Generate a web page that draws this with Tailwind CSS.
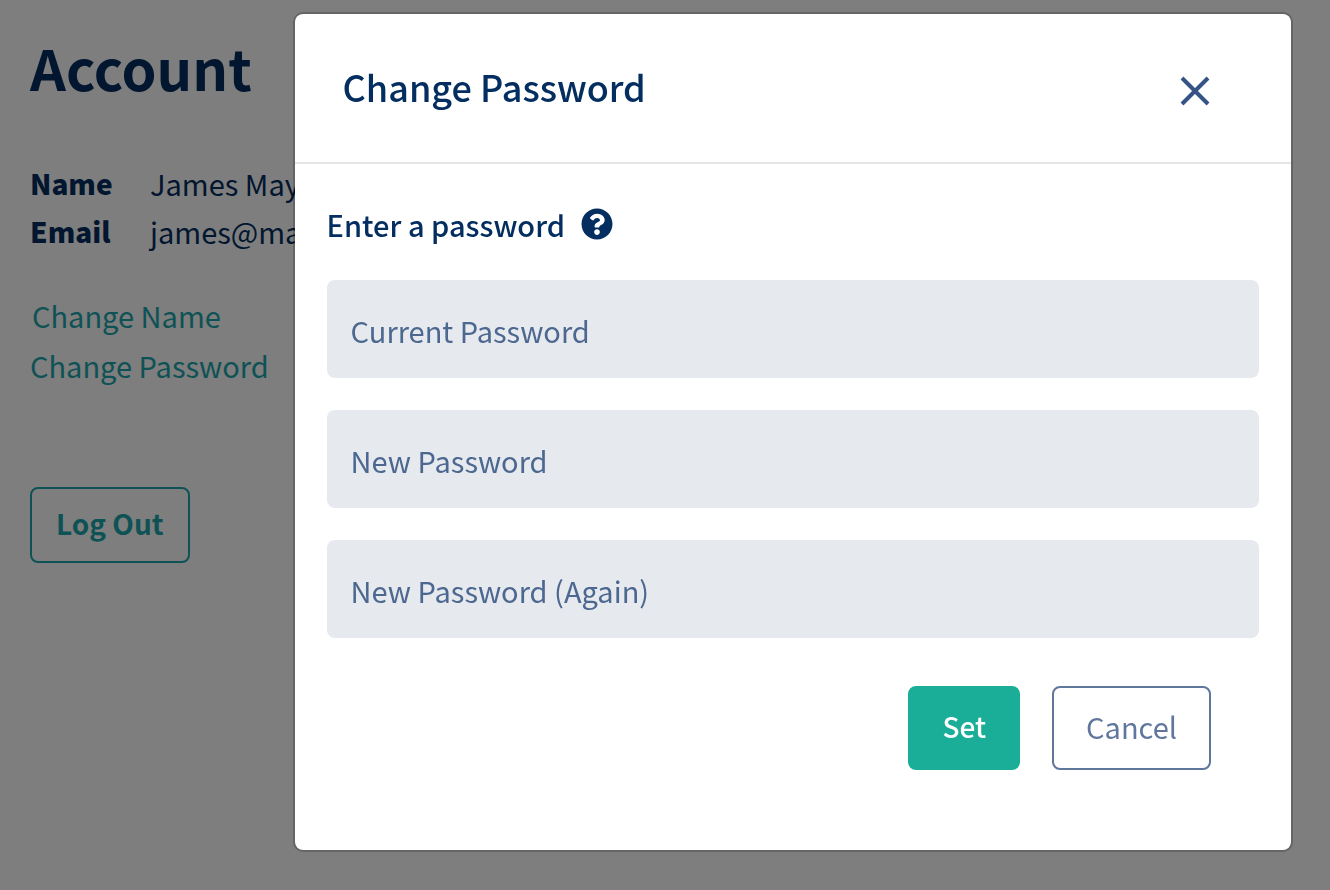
<!DOCTYPE html>
<html lang="en">
<head>
    <meta charset="UTF-8">
    <meta name="viewport" content="width=device-width, initial-scale=1.0">
    <title>Account</title>
    <script src="https://cdn.jsdelivr.net/npm/@tailwindcss/browser@4"></script>
</head>
<body class="min-h-screen overflow-hidden bg-[#fafdfb] font-['Noto_Sans_CJK_SC',sans-serif] text-[29px] leading-[48px] text-[#042d60]">
    <main class="px-[30px] pt-7">
        <h1 class="text-[56px] leading-[78px] font-bold">Account</h1>

        <dl class="mt-[53px] grid grid-cols-[120px_1fr] whitespace-nowrap">
            <dt class="text-[28px] leading-[48px] font-black">Name</dt>
            <dd>James May</dd>
            <dt class="text-[28px] leading-[48px] font-black">Email</dt>
            <dd>james@ma</dd>
        </dl>

        <div class="mt-[35px] flex flex-col items-start text-[#1ca5ac]">
            <button type="button" class="px-[2px] leading-[50px]">Change Name</button>
            <button type="button" class="leading-[50px]">Change Password</button>
            <button type="button" class="mt-[97px] rounded-lg border-2 border-[#1ca5ac] px-6 pt-[10px] pb-[14px] text-[28px] leading-[48px] font-bold">Log Out</button>
        </div>
    </main>

    <!-- Modal -->
    <div class="fixed inset-0 flex items-start bg-black/50 pt-3 pr-[37px] pl-[22%]">
        <div role="dialog" aria-modal="true" aria-labelledby="dialogTitle" class="w-full rounded-[10px] border-2 border-black/20 bg-white bg-clip-padding">
            <div class="flex items-start justify-between border-b-2 border-[#e5e5e5] pt-[43px] pr-20 pb-[47px] pl-12">
                <h2 id="dialogTitle" class="text-[36px] leading-[58px] font-medium">Change Password</h2>
                <button type="button" aria-label="Close" class="mt-[18px] text-[#355386]">
                    <svg class="size-8" viewBox="0 0 32 32" fill="none" stroke="currentColor" stroke-width="4">
                        <path d="M3 3 29 29M29 3 3 29" />
                    </svg>
                </button>
            </div>

            <form class="px-8 pt-9 pb-20">
                <div class="flex items-center gap-4">
                    <h3 class="font-medium">Enter a password</h3>
                    <button type="button" aria-label="Password help">
                        <svg class="size-8" viewBox="0 0 512 512" fill="currentColor">
                            <path d="M504 256c0 136.997-111.043 248-248 248S8 392.997 8 256C8 119.083 119.043 8 256 8s248 111.083 248 248zM262.655 90c-54.497 0-89.255 22.957-116.549 63.758-3.536 5.286-2.353 12.415 2.715 16.258l34.699 26.31c5.205 3.947 12.621 3.008 16.665-2.122 17.864-22.658 30.113-35.797 57.303-35.797 20.429 0 45.698 13.148 45.698 32.958 0 14.976-12.363 22.667-32.534 33.976C247.128 238.528 216 254.941 216 296v4c0 6.627 5.373 12 12 12h56c6.627 0 12-5.373 12-12v-1.333c0-28.462 83.186-29.647 83.186-106.667 0-58.002-60.165-102-116.531-102zM256 338c-25.365 0-46 20.635-46 46 0 25.364 20.635 46 46 46s46-20.636 46-46c0-25.365-20.635-46-46-46z" />
                        </svg>
                    </button>
                </div>

                <div class="mt-8 flex flex-col gap-8">
                    <input type="password" aria-label="Current Password" placeholder="Current Password" class="h-[98px] w-full rounded-lg bg-[#e6e9ee] px-6 pt-[2px] placeholder:text-[#4d6890]">
                    <input type="password" aria-label="New Password" placeholder="New Password" class="h-[98px] w-full rounded-lg bg-[#e6e9ee] px-6 pt-[2px] placeholder:text-[#4d6890]">
                    <input type="password" aria-label="New Password (Again)" placeholder="New Password (Again)" class="h-[98px] w-full rounded-lg bg-[#e6e9ee] px-6 pt-[2px] placeholder:text-[#4d6890]">
                </div>

                <div class="mt-12 mr-12 flex justify-end gap-8">
                    <button type="submit" class="rounded-lg border-2 border-[#1aae98] bg-[#1aae98] px-8 pt-[14px] pb-[18px] text-[28px] leading-[48px] font-medium text-white">Set</button>
                    <button type="button" class="rounded-lg border-2 border-[#5f779d] px-8 pt-[14px] pb-[18px] text-[#5f779d]">Cancel</button>
                </div>
            </form>
        </div>
    </div>
</body>
</html>
